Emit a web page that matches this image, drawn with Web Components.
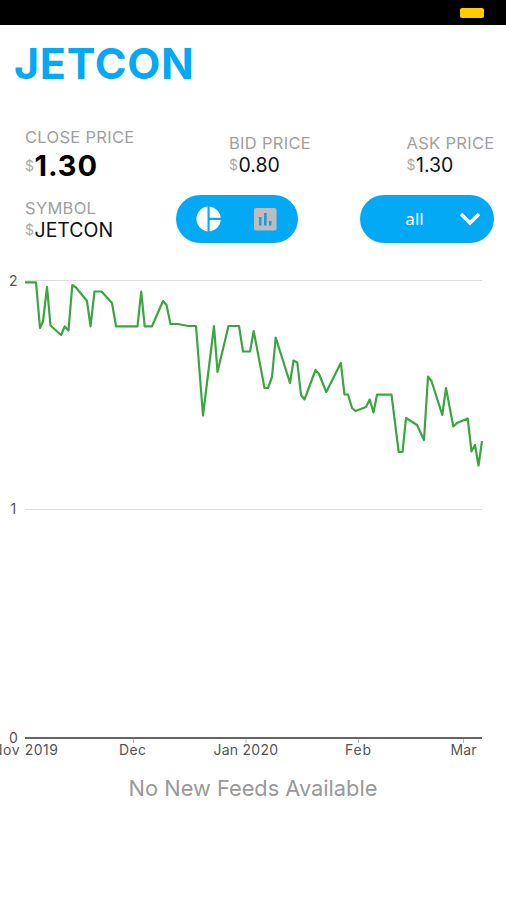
<!DOCTYPE html>
<html lang="en"><head><meta charset="utf-8"><title>JETCON</title>
<style>html,body{margin:0;background:#fff}body{font-family:Inter,"Liberation Sans",sans-serif}</style></head>
<body><stock-page></stock-page>
<script>
const define = (name, html, after) => customElements.define(name, class extends HTMLElement {
  connectedCallback() {
    if (this.shadowRoot) return;
    this.attachShadow({mode: "open"}).innerHTML = html;
    if (after) after(this, this.shadowRoot);
  }
});

define("status-bar", `<style>:host{display:flex;justify-content:flex-end;box-sizing:border-box;height:25px;padding:8px 22px 0 0;background:#000}
i{width:24px;height:10px;border-radius:2px;background:#fc0}</style><i></i>`);

define("price-field", `<style>:host{display:block;white-space:nowrap}
.label{color:#a0a0a0;font-size:16.5px;line-height:20px;letter-spacing:.3px}
.value{display:flex;align-items:center;height:24px;color:#111;font-size:19.5px;line-height:24px}
.value b{font-weight:inherit}
small{font-size:14px;color:#aaa;width:9.500px}
:host([strong]) .value{font-size:29px;font-weight:700;height:37px;color:#000;letter-spacing:.9px}
:host([strong]) small{font-weight:400;letter-spacing:0}</style>
<div class="label"><slot name="label"></slot></div><div class="value"><small>$</small><b><slot></slot></b></div>`);

define("chart-switch", `<style>:host{display:flex;box-sizing:border-box;width:122px;height:48px;border-radius:24px;background:#03a9f4;align-items:center;padding:0 21px 0 20px;justify-content:space-between}
svg{display:block}</style>
<svg width="25" height="26" viewBox="0 0 25 26"><path fill="#fff" d="M11.500 .5V25.500A12.600 12.600 0 0 1 11.500 .5ZM13.600 .5A12.500 12.500 0 0 1 24.800 11.800H13.600ZM13.600 14H24.800A12.500 12.500 0 0 1 13.600 25.500Z"/></svg>
<svg width="24" height="24" viewBox="0 0 24 24"><rect x="1" y="1" width="22.500" height="22.500" rx="2" fill="#bdbdbd"/><path fill="#1e9cdc" d="M6 10h2.500v8.500H6zM11 6h2.700v12.500H11zM16 14h2.500v4.500H16z"/></svg>`);

define("range-select", `<style>:host{display:grid;grid-template-columns:1fr 22px;box-sizing:border-box;width:134px;height:48px;border-radius:24px;background:#03a9f4;align-items:center;padding:0 13px 0 10px;color:#fff;font:17px/48px "Noto Sans",sans-serif}
span{text-align:center}svg{display:block}</style><span><slot></slot></span>
<svg width="22" height="16" viewBox="0 0 22 16"><path d="M2 3L11 12L20 3" fill="none" stroke="#fff" stroke-width="3.4"/></svg>`);

define("price-chart", `<style>:host{display:block;height:500px}svg{display:block}text{font:14px Inter,sans-serif;fill:#555}</style>
<svg width="506" height="500" viewBox="0 265 506 500">
<path d="M25 280.500H482M25 509.500H482" stroke="#dedede"/>
<path d="M25 738H482" stroke="#666" stroke-width="2"/>
<path d="M133.500 739v4M246 739v4M358.500 739v4M463.500 739v4" stroke="#bbb"/>
<g id="labels"></g>
<polyline fill="none" stroke="#3aa640" stroke-width="2.2" stroke-linejoin="round" points="25,282.3 36,282.3 40,328 43,321.5 47,287 50.5,325.5 61,335 64.7,326.5 68.5,330.5 72.3,285 76,287.5 87,301 90.5,326.3 94.5,291.5 101.5,291.5 112,303 116,326.3 137.500,326.3 141.2,291.5 144.7,326.3 152,326.3 163,301 166.5,305 170.5,324 178,324 188,326 196,326 203,415.5 214,326 217.5,372 228.5,326 239,326 243,351.500 250,351.500 253.700,331 264.500,388 268,388 272,377 275.700,337.500 290,383 293.500,360.500 297.300,362.500 301,395 304.500,399.500 315.500,370 319,374 326.300,392 340.800,363 344.500,394.500 348,394.500 352,408 355.500,411 366,407 369.700,399.500 373.500,412.500 377,394.700 391.500,394.700 398.700,452 402.500,452 406,418 417,425 424,440 428,376.500 431.500,381 442.300,415 446,388 453.300,426.500 457,423 467.700,418.500 471.500,451.500 475,445 478.500,465.500 482,441"/>
</svg>`, (host, root) => {
  const labels = [["2",9,286,9],["1",10.5,514,7],["0",9,742.5,9.5],["Nov 2019",-8,755,66],["Dec",119,755,27],["Jan 2020",213.5,755,64.5],["Feb",345,755,26],["Mar",450.5,755,26]];
  root.getElementById("labels").innerHTML = labels.map(([t,x,y,w]) => `<text x="${x}" y="${y}" textLength="${w}">${t}</text>`).join("");
});

define("stock-page", `<style>:host{display:block;width:506px;height:900px;overflow:hidden;background:#fff}
h1{margin:0;padding:11px 0 0 14px;height:89px;box-sizing:border-box;font-size:43px;line-height:54px;font-weight:700;color:#03a9f4;letter-spacing:.7px}
.prices{display:grid;grid-template-columns:204px 177.500px 1fr;align-items:start;padding:13px 0 0 25px;height:68px}
.prices :not([strong]){padding-top:6px}
.prices span{padding:0!important}
.controls{display:grid;grid-template-columns:150.500px 184.500px 1fr;align-items:start;padding-left:25px;height:70px}
.controls price-field{padding-top:2.500px}
p{margin:0;padding-top:9px;text-align:center;font-size:21.800px;line-height:28px;color:#999}
</style>
<status-bar></status-bar><h1>JETCON</h1>
<div class="prices">
<price-field strong><span slot="label">CLOSE PRICE</span>1.30</price-field>
<price-field><span slot="label">BID PRICE</span>0.80</price-field>
<price-field><span slot="label">ASK PRICE</span>1.30</price-field></div>
<div class="controls"><price-field><span slot="label">SYMBOL</span>JETCON</price-field><chart-switch></chart-switch><range-select>all</range-select></div>
<price-chart></price-chart><p>No New Feeds Available</p>`);
</script></body></html>
